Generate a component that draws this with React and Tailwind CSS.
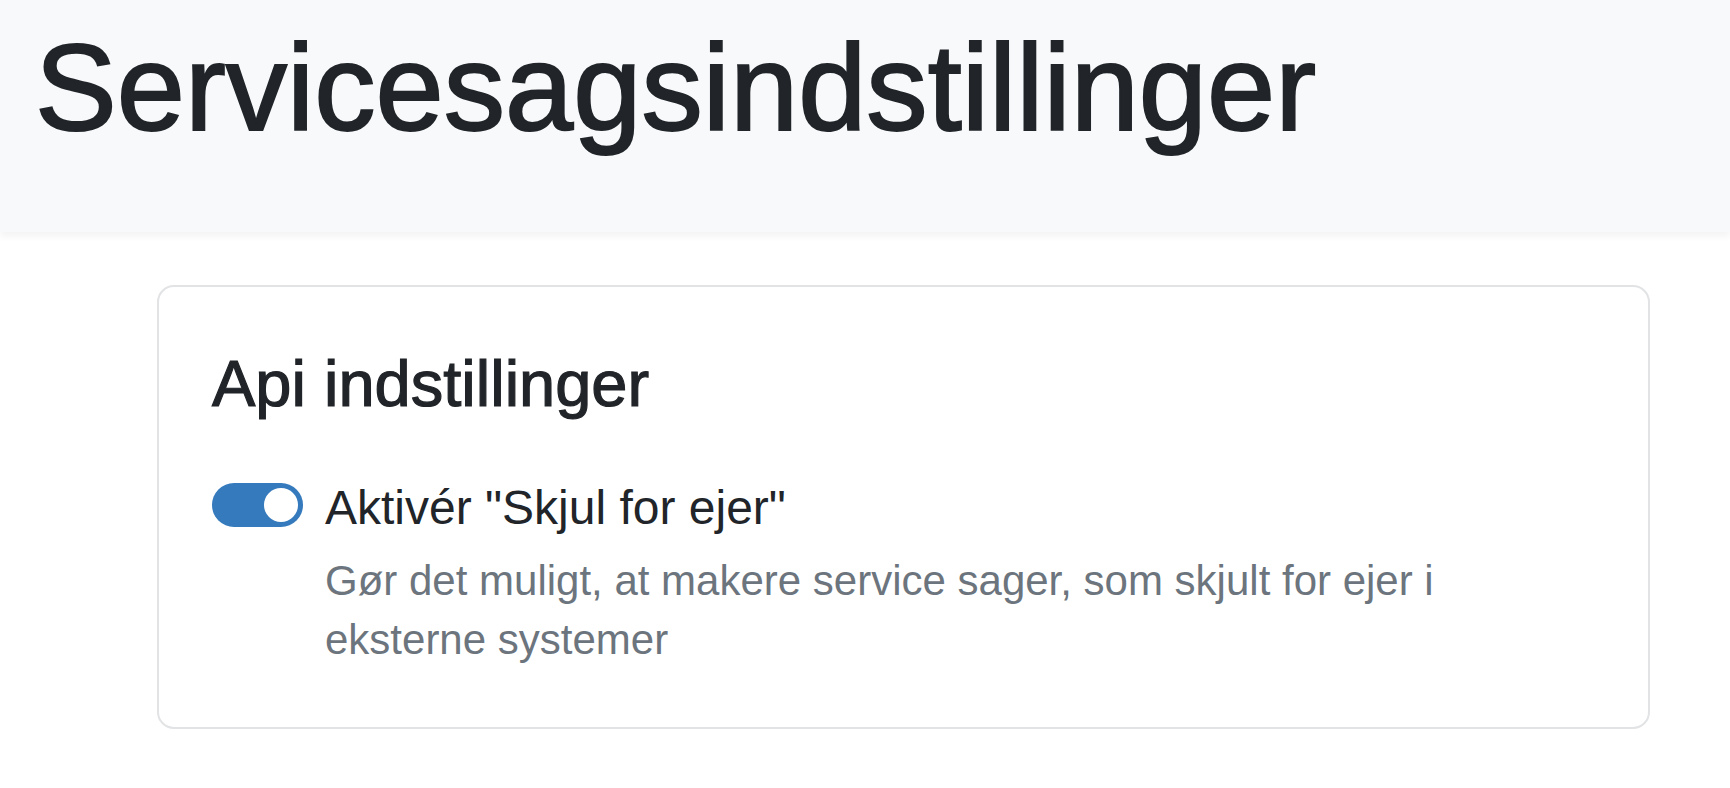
export default function App() {
  return (
    <div className="min-h-[788px] bg-white font-['Liberation_Sans',Arial,sans-serif] text-[#212529]">
      {/* Page header */}
      <header className="h-[232px] bg-[#f8f9fa] pt-[15px] pl-[35px] shadow-[0_5px_6px_rgba(0,0,0,0.045)]">
        <h1 className="text-[122.6px] leading-[146px] font-normal [-webkit-text-stroke:2px_#212529]">
          Servicesagsindstillinger
        </h1>
      </header>

      {/* Settings card */}
      <main className="pt-[53px]">
        <section className="ml-[157px] w-[1493px] rounded-[17px] border-2 border-[#e2e3e5] bg-white pl-[53px] pr-[54px] pt-[58px] pb-[58px]">
          <h2 className="text-[65px] leading-[77px] font-normal [-webkit-text-stroke:1.2px_#212529]">
            Api indstillinger
          </h2>

          <div className="mt-[50px] flex items-start gap-[22px]">
            {/* Switch (checked) */}
            <button
              type="button"
              role="switch"
              aria-checked="true"
              className="mt-[11px] flex h-[44px] w-[91px] shrink-0 items-center justify-end rounded-full bg-[#357abd] pr-[5px]"
            >
              <span className="block h-[34px] w-[34px] rounded-full bg-white" />
            </button>

            <div className="min-w-0 flex-1">
              <label className="block text-[48px] leading-[72px]">Aktivér "Skjul for ejer"</label>
              <p className="mt-[7px] text-[42px] leading-[59px] text-[#6c757d]">
                Gør det muligt, at makere service sager, som skjult for ejer i eksterne systemer
              </p>
            </div>
          </div>
        </section>
      </main>
    </div>
  );
}
